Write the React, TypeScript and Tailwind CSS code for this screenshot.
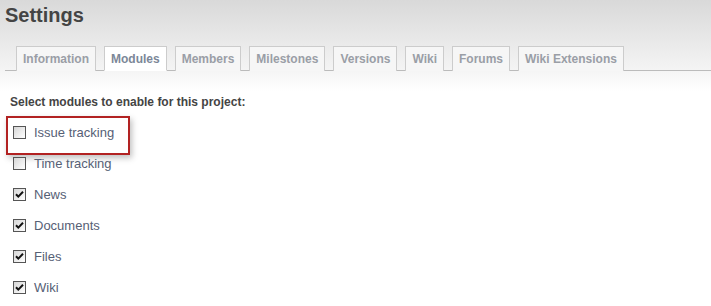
const tabs = ['Information', 'Modules', 'Members', 'Milestones', 'Versions', 'Wiki', 'Forums', 'Wiki Extensions']

const modules = [
  { name: 'Issue tracking', on: false },
  { name: 'Time tracking', on: false },
  { name: 'News', on: true },
  { name: 'Documents', on: true },
  { name: 'Files', on: true },
  { name: 'Wiki', on: true },
]

function Box({ on }: { on: boolean }) {
  return (
    <span className="w-[13px] h-[13px] border border-[#555] bg-gradient-to-br from-[#d6d6d6] to-white flex items-center justify-center shrink-0">
      {on && (
        <svg width="9" height="9" viewBox="0 0 9 9">
          <path d="M1 4.2 L3.3 6.6 L8 1.8" stroke="#111" strokeWidth="2" fill="none" />
        </svg>
      )}
    </span>
  )
}

export default function App() {
  return (
    <div
      className="w-[711px] h-[306px] overflow-hidden bg-gradient-to-b from-[#d9d9d9] via-[#f3f3f3] via-[22%] to-white to-[30%] text-[#444]"
      style={{ fontFamily: '"Liberation Sans", Arial, sans-serif' }}
    >
      <h2 className="text-[20px] font-bold leading-[24px] pl-[5px] pt-[3px] text-[#444]">Settings</h2>
      <div className="mt-[19px] ml-[5px] border-b border-[#bbb] flex gap-[8px] pl-[11px] h-[25px]">
        {tabs.map((t) => (
          <div
            key={t}
            className={
              'h-[25px] px-[6px] border border-[#ccc] text-[12px] font-bold leading-[24px] ' +
              (t === 'Modules'
                ? 'bg-white border-b-white text-[#7c8798]'
                : 'bg-[#f6f6f6] border-b-0 h-[24px] text-[#9a9ea6]')
            }
          >
            {t}
          </div>
        ))}
      </div>
      <p className="text-[12px] font-bold text-[#444] pl-[10px] mt-[24px] leading-[14px]">
        Select modules to enable for this project:
      </p>
      <div className="mt-[8px]">
        {modules.map((m, i) => (
          <div key={m.name} className="relative h-[31px] flex items-center pl-[13px] gap-[8px]">
            {i === 0 && (
              <span className="absolute left-[6px] top-[-1px] w-[124px] h-[39px] border-2 border-[#b22222] shadow-[2px_3px_6px_rgba(0,0,0,0.25)]" />
            )}
            <Box on={m.on} />
            <span className="text-[13px] text-[#566075]">{m.name}</span>
          </div>
        ))}
      </div>
    </div>
  )
}
